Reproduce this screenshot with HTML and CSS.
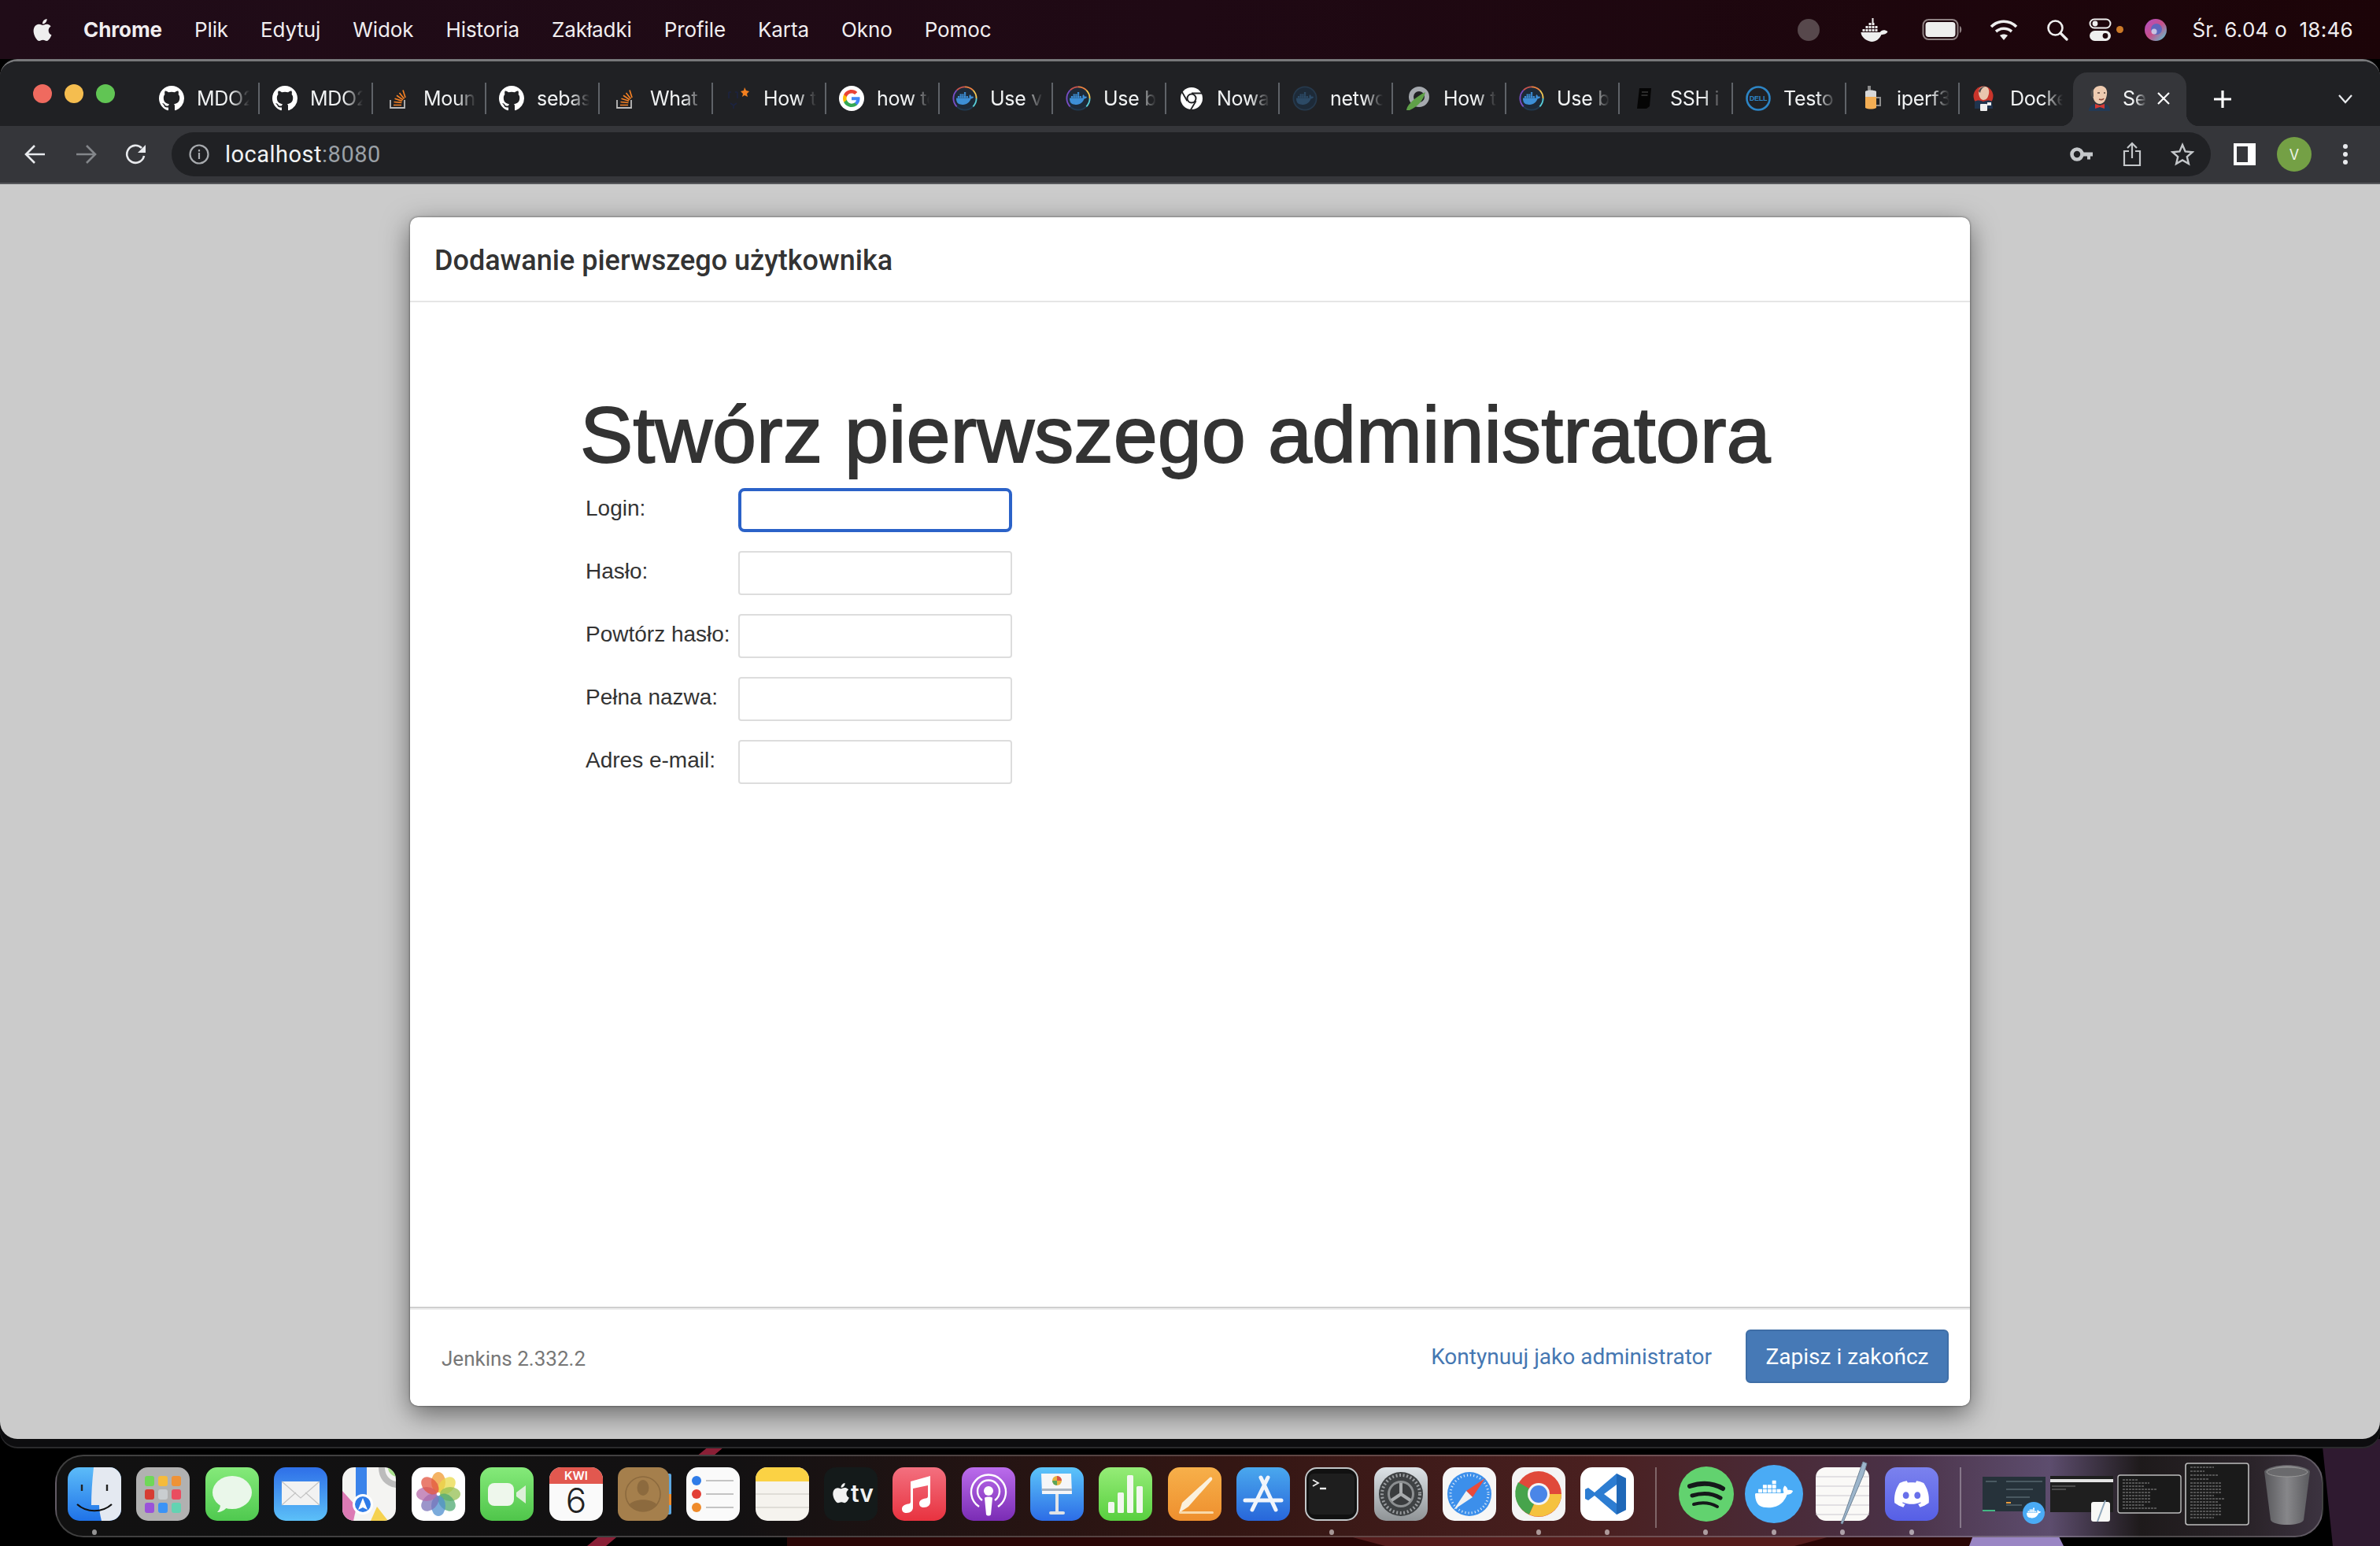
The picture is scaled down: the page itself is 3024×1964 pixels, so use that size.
FILE: index.html
```html
<!DOCTYPE html>
<html lang="pl">
<head>
    <meta charset="UTF-8">
    <title>Jenkins - Dodawanie pierwszego użytkownika</title>
    <link rel="stylesheet" href="styles.css">
</head>
<body>

    <svg class="defs">
        <symbol id="i-github" viewBox="0 0 16 16"><path fill="#fff" d="M8 0C3.58 0 0 3.58 0 8c0 3.54 2.29 6.53 5.47 7.59.4.07.55-.17.55-.38 0-.19-.01-.82-.01-1.49-2.01.37-2.53-.49-2.69-.94-.09-.23-.48-.94-.82-1.13-.28-.15-.68-.52-.01-.53.63-.01 1.08.58 1.23.82.72 1.21 1.87.87 2.33.66.07-.52.28-.87.51-1.07-1.78-.2-3.64-.89-3.64-3.95 0-.87.31-1.59.82-2.15-.08-.2-.36-1.02.08-2.12 0 0 .67-.21 2.2.82.64-.18 1.32-.27 2-.27.68 0 1.36.09 2 .27 1.53-1.04 2.2-.82 2.2-.82.44 1.1.16 1.92.08 2.12.51.56.82 1.27.82 2.15 0 3.07-1.87 3.75-3.65 3.95.29.25.54.73.54 1.48 0 1.07-.01 1.93-.01 2.2 0 .21.15.46.55.38A8.013 8.013 0 0016 8c0-4.42-3.58-8-8-8z"/></symbol>
        <symbol id="i-stack" viewBox="0 0 32 32"><path fill="none" stroke="#bcbbbb" stroke-width="1.800" d="M6 18v10h18V18"/><path fill="none" stroke="#f48024" stroke-width="1.700" d="M10 24.500h10M10.500 20.500l10 1M11.500 16.300l9.500 3M14 12.300l8 5.500M17.500 9l6 7.500M22 5.500l3 9.500"/></symbol>
        <symbol id="i-whale" viewBox="0 0 24 24"><path d="M13.983 11.078h2.119a.186.186 0 00.186-.185V9.006a.186.186 0 00-.186-.186h-2.119a.185.185 0 00-.185.185v1.888c0 .102.083.185.185.185m-2.954-5.43h2.118a.186.186 0 00.186-.186V3.574a.186.186 0 00-.186-.185h-2.118a.185.185 0 00-.185.185v1.888c0 .102.082.185.185.186m0 2.716h2.118a.187.187 0 00.186-.186V6.29a.186.186 0 00-.186-.185h-2.118a.185.185 0 00-.185.185v1.887c0 .102.082.185.185.186m-2.93 0h2.12a.186.186 0 00.184-.186V6.29a.185.185 0 00-.185-.185H8.1a.185.185 0 00-.185.185v1.887c0 .102.083.185.185.186m-2.964 0h2.119a.186.186 0 00.185-.186V6.29a.185.185 0 00-.185-.185H5.136a.186.186 0 00-.186.185v1.887c0 .102.084.185.186.186m5.893 2.715h2.118a.186.186 0 00.186-.185V9.006a.186.186 0 00-.186-.186h-2.118a.185.185 0 00-.185.185v1.888c0 .102.082.185.185.185m-2.93 0h2.12a.185.185 0 00.184-.185V9.006a.185.185 0 00-.184-.186h-2.12a.185.185 0 00-.184.185v1.888c0 .102.083.185.185.185m-2.964 0h2.119a.185.185 0 00.185-.185V9.006a.185.185 0 00-.184-.186h-2.12a.186.186 0 00-.186.186v1.887c0 .102.084.185.186.185m-2.92 0h2.12a.185.185 0 00.184-.185V9.006a.185.185 0 00-.184-.186h-2.12a.185.185 0 00-.184.185v1.888c0 .102.082.185.185.185M23.763 9.89c-.065-.051-.672-.51-1.954-.51-.338.001-.676.03-1.01.087-.248-1.7-1.653-2.53-1.716-2.566l-.344-.199-.226.327c-.284.438-.49.922-.612 1.43-.23.97-.09 1.882.403 2.661-.595.332-1.55.413-1.744.42H.751a.751.751 0 00-.75.748 11.376 11.376 0 00.692 4.062c.545 1.428 1.355 2.48 2.41 3.124 1.18.723 3.1 1.137 5.275 1.137.983.003 1.963-.086 2.93-.266a12.248 12.248 0 003.823-1.389c.98-.567 1.86-1.288 2.61-2.136 1.252-1.418 1.998-2.997 2.553-4.4h.221c1.372 0 2.215-.549 2.68-1.009.309-.293.55-.65.707-1.046l.098-.288z"/></symbol>
        <symbol id="i-docker-ring" viewBox="0 0 32 32">
            <circle cx="16" cy="16" r="14.6" fill="#1d2a38" stroke="#213a50" stroke-width="1.8"/>
            <path fill="none" stroke="#f0803c" stroke-width="1.8" d="M16 1.4A14.6 14.6 0 0 1 26.3 5.7"/>
            <path fill="none" stroke="#f5c64f" stroke-width="1.8" d="M26.3 5.7A14.6 14.6 0 0 1 30.6 16"/>
            <path fill="none" stroke="#5ad0d8" stroke-width="1.8" d="M30.6 16A14.6 14.6 0 0 1 26.3 26.3"/>
            <path fill="none" stroke="#c9524a" stroke-width="1.8" d="M16 1.4A14.6 14.6 0 0 0 5.7 5.7"/>
            <path fill="none" stroke="#7a4bc2" stroke-width="1.8" d="M5.7 5.7A14.6 14.6 0 0 0 1.4 16 14.6 14.6 0 0 0 5.7 26.3"/>
            <use href="#i-whale" x="5" y="5" width="22" height="22" fill="#3d8fd6"/>
        </symbol>
    </svg>

    <header class="menubar">
        <div class="menu-left">
            <svg class="apple" viewBox="0 0 24 24"><path fill="#eee" d="M12.152 6.896c-.948 0-2.415-1.078-3.96-1.04-2.04.027-3.91 1.183-4.961 3.014-2.117 3.675-.546 9.103 1.519 12.09 1.013 1.454 2.208 3.09 3.792 3.039 1.52-.065 2.09-.987 3.935-.987 1.831 0 2.35.987 3.96.948 1.637-.026 2.676-1.48 3.676-2.948 1.156-1.688 1.636-3.325 1.662-3.415-.039-.013-3.182-1.221-3.22-4.857-.026-3.04 2.48-4.494 2.597-4.559-1.429-2.09-3.623-2.324-4.39-2.376-2-.156-3.675 1.09-4.61 1.09zM15.53 3.83c.843-1.012 1.4-2.427 1.245-3.83-1.207.052-2.662.805-3.532 1.818-.78.896-1.454 2.338-1.273 3.714 1.338.104 2.715-.688 3.559-1.701"/></svg>
            <span class="menu-app">Chrome</span>
            <span>Plik</span>
            <span>Edytuj</span>
            <span>Widok</span>
            <span>Historia</span>
            <span>Zakładki</span>
            <span>Profile</span>
            <span>Karta</span>
            <span>Okno</span>
            <span>Pomoc</span>
        </div>
        <div class="menu-right">
            <span class="status-dot"></span>
            <svg class="st-docker" viewBox="0 0 36 30"><path fill="#eee" d="M15 0h2v6h-2zM11 6h3v3h-3zM15 6h3v3h-3zM7 10h3v3H7zM11 10h3v3h-3zM15 10h3v3h-3zM19 10h3v3h-3zM3 14h3v3H3zM7 14h3v3H7zM11 14h3v3h-3zM15 14h3v3h-3zM19 14h3v3h-3zM1 18h24c2-3 6-4 10-1-1 3-5 4-8 4-2 5-7 9-12 9S1 25 1 18z"/></svg>
            <svg class="st-battery" viewBox="0 0 52 30"><rect x="1.5" y="2" width="44" height="25" rx="7" fill="none" stroke="#8e8082" stroke-width="2"/><rect x="4.5" y="5" width="38" height="19" rx="4" fill="#eee"/><path d="M48 10c3 1 3 8 0 9z" fill="#8e8082"/></svg>
            <svg class="st-wifi" viewBox="0 0 36 28"><g fill="none" stroke="#eee" stroke-width="3.6"><path d="M2 10c9-9 23-9 32 0"/><path d="M8 16c6-5 14-5 20 0"/></g><path fill="#eee" d="M13 21c3-2 7-2 10 0l-5 6z"/></svg>
            <svg class="st-search" viewBox="0 0 28 28"><circle cx="11.5" cy="11.5" r="9" fill="none" stroke="#eee" stroke-width="2.6"/><path d="M18 18l8 8" stroke="#eee" stroke-width="3.2" stroke-linecap="round"/></svg>
            <svg class="st-control" viewBox="0 0 30 30"><rect x="1.5" y="1.5" width="26" height="11" rx="5.5" fill="none" stroke="#eee" stroke-width="2"/><circle cx="8" cy="7" r="3.4" fill="#eee"/><rect x="1" y="16" width="27" height="13" rx="6.5" fill="#eee"/><circle cx="21" cy="22.5" r="3.4" fill="#1d060c"/></svg>
            <span class="status-orange"></span>
            <svg class="st-siri" viewBox="0 0 28 28"><defs><linearGradient id="siri" x1="0" y1="0" x2="1" y2="1"><stop offset="0" stop-color="#b04fc8"/><stop offset=".5" stop-color="#c8508a"/><stop offset="1" stop-color="#4fd0d8"/></linearGradient></defs><circle cx="14" cy="14" r="14" fill="url(#siri)"/><circle cx="15" cy="13" r="7" fill="#4f68c4" opacity=".85"/><circle cx="12" cy="16" r="3.500" fill="#e9e3f0" opacity=".75"/></svg>
            <span class="clock">Śr. 6.04 o&nbsp; 18:46</span>
        </div>
    </header>

    <div class="browser">
        <div class="tabstrip">
            <div class="traffic">
                <span class="light light-red"></span>
                <span class="light light-yellow"></span>
                <span class="light light-green"></span>
            </div>

            <div class="tab"><svg class="favicon"><use href="#i-github"/></svg><span class="tab-title">MDO2</span></div>
            <div class="tab"><svg class="favicon"><use href="#i-github"/></svg><span class="tab-title">MDO2</span></div>
            <div class="tab"><svg class="favicon"><use href="#i-stack"/></svg><span class="tab-title">Mount</span></div>
            <div class="tab"><svg class="favicon"><use href="#i-github"/></svg><span class="tab-title">sebas</span></div>
            <div class="tab"><svg class="favicon"><use href="#i-stack"/></svg><span class="tab-title">What</span></div>
            <div class="tab">
                <svg class="favicon" viewBox="0 0 32 32"><path fill="none" stroke="#1c2340" stroke-width="1.6" d="M4 8h3M4 8v8M12 8h3M15 8v8M6 22l4 3 4-3M10 25v4"/><path fill="#f4801f" d="M24 2l2 4 4 1-3 3 1 4-4-2-3 2 1-4-3-3 4-1z"/></svg>
                <span class="tab-title">How t</span>
            </div>
            <div class="tab">
                <svg class="favicon" viewBox="0 0 32 32"><circle cx="16" cy="16" r="16" fill="#fff"/><g transform="translate(5 5) scale(.917)"><path fill="#4285f4" d="M23.5 12.3c0-.8-.1-1.6-.2-2.3H12v4.4h6.5c-.3 1.5-1.1 2.7-2.4 3.6v3h3.8c2.3-2.1 3.6-5.2 3.6-8.7z"/><path fill="#34a853" d="M12 24c3.2 0 6-1.1 7.9-2.9l-3.8-3c-1.1.7-2.4 1.2-4.1 1.2-3.1 0-5.8-2.1-6.7-5H1.3v3.1C3.3 21.3 7.3 24 12 24z"/><path fill="#fbbc05" d="M5.300 14.300c-.5-1.500-.5-3.100 0-4.600V6.600h-4c-1.700 3.300-1.700 7.500 0 10.800z"/><path fill="#ea4335" d="M12 4.800c1.800 0 3.300.6 4.600 1.800l3.400-3.400C17.900 1.200 15.200 0 12 0 7.300 0 3.300 2.700 1.300 6.600l4 3.100c.9-2.900 3.600-4.900 6.700-4.900z"/></g></svg>
                <span class="tab-title">how to</span>
            </div>
            <div class="tab"><svg class="favicon"><use href="#i-docker-ring"/></svg><span class="tab-title">Use v</span></div>
            <div class="tab"><svg class="favicon"><use href="#i-docker-ring"/></svg><span class="tab-title">Use b</span></div>
            <div class="tab">
                <svg class="favicon" viewBox="0 0 32 32"><circle cx="16" cy="16" r="14" fill="#fff"/><circle cx="16" cy="16" r="6.500" fill="#202124"/><circle cx="16" cy="16" r="4.500" fill="#fff"/><path d="M16 9.500h14M10.400 19.200L3.400 7M21.600 19.200L14.600 31" stroke="#202124" stroke-width="1.800" fill="none"/></svg>
                <span class="tab-title">Nowa</span>
            </div>
            <div class="tab">
                <svg class="favicon" viewBox="0 0 32 32"><circle cx="16" cy="16" r="14.600" fill="#1d2a38" stroke="#26394c" stroke-width="1.800"/><use href="#i-whale" x="5" y="5" width="22" height="22" fill="#2c4a66"/></svg>
                <span class="tab-title">netwo</span>
            </div>
            <div class="tab">
                <svg class="favicon" viewBox="0 0 32 32"><circle cx="17" cy="14" r="10" fill="none" stroke="#a5a9ae" stroke-width="6"/><path d="M1 31c1-5 3-7 5-9 5-6 13-11 19-14-2 10-9 18-20 23z" fill="#5fa048"/></svg>
                <span class="tab-title">How t</span>
            </div>
            <div class="tab"><svg class="favicon"><use href="#i-docker-ring"/></svg><span class="tab-title">Use b</span></div>
            <div class="tab">
                <svg class="favicon" viewBox="0 0 32 32"><path fill="#050505" d="M9 3h15l-2 23-4 3H6z"/><path d="M12 8h8M11.500 12h8" stroke="#3a3a3a" stroke-width="1.600"/></svg>
                <span class="tab-title">SSH i</span>
            </div>
            <div class="tab">
                <svg class="favicon" viewBox="0 0 32 32"><circle cx="16" cy="16" r="14.500" fill="none" stroke="#2d85c5" stroke-width="2.600"/><text class="dell-text" x="16" y="19">DELL</text></svg>
                <span class="tab-title">Testo</span>
            </div>
            <div class="tab">
                <svg class="favicon" viewBox="0 0 32 32"><rect x="11" y="0" width="4" height="7" fill="#8a8a8a"/><path fill="#d8d8d8" d="M8 7c4-2 10-2 14 0v8H8z"/><path fill="#f3ae54" d="M8 14h14v14c-4 2-10 2-14 0z"/><path fill="none" stroke="#8d8d8d" stroke-width="2" d="M22 15h5v10h-5"/></svg>
                <span class="tab-title">iperf3</span>
            </div>
            <div class="tab tab-last">
                <svg class="favicon" viewBox="0 0 32 32"><circle cx="14" cy="13" r="12.500" fill="#c9352b"/><path d="M8 8c0-5 4-8 8-7 4 0 6 4 5 9-1 5-3 8-7 8-3 0-6-4-6-10z" fill="#e8c6ae"/><path d="M8 7c1-4 5-6 8-6-4 2-5 4-6 8z" fill="#444"/><path fill="#20344e" d="M3 20c3-2 7-2 11 0 4-2 8-2 11 0l1 9H3z"/><rect x="10" y="23" width="9" height="9" rx="1" fill="#efefef"/><rect x="19" y="21" width="5" height="4" fill="#efefef"/></svg>
                <span class="tab-title">Docke</span>
            </div>
            <div class="tab tab-active">
                <svg class="favicon" viewBox="0 0 32 32"><path d="M7 10C7 4 11 0 17 0c6 0 9 5 8 11-1 7-4 12-9 12-6 0-9-6-9-13z" fill="#eecbb0"/><path d="M6 14c-2-2-2-8 1-10 1 3 1 6 1 10z" fill="#4c4c4c"/><path d="M13 9h3M21 9h2" stroke="#55423a" stroke-width="1.600"/><path d="M15 17c2 1 5 1 6-1" fill="none" stroke="#8c4a3a" stroke-width="1.600"/><path fill="#233a55" d="M2 32c0-5 3-8 8-9l6 2 6-2c4 1 7 4 7 9z"/><path fill="#d33833" d="M10 23l6 2 6-2v6l-6-2-6 2z"/></svg>
                <span class="tab-title tab-title-short">Se</span>
                <svg class="tab-close" viewBox="0 0 18 18"><path d="M2 2l14 14M16 2L2 16" stroke="#fff" stroke-width="2.200"/></svg>
            </div>

            <svg class="new-tab" viewBox="0 0 24 24"><path d="M12 1v22M1 12h22" stroke="#fff" stroke-width="3.200"/></svg>
            <svg class="tab-menu" viewBox="0 0 20 14"><path d="M2 2l8 9 8-9" fill="none" stroke="#e8eaed" stroke-width="2.200"/></svg>
        </div>

        <div class="toolbar">
            <svg class="tool-btn" viewBox="0 0 30 30"><path d="M27 15H4M14 4L3 15l11 11" fill="none" stroke="#e8eaed" stroke-width="2.600"/></svg>
            <svg class="tool-btn" viewBox="0 0 30 30"><path d="M3 15h23M16 4l11 11-11 11" fill="none" stroke="#83868a" stroke-width="2.600"/></svg>
            <svg class="tool-btn" viewBox="0 0 30 30"><path d="M25 17a11 11 0 1 1-3-10" fill="none" stroke="#e8eaed" stroke-width="2.600"/><path d="M27 3v10H17z" fill="#e8eaed"/></svg>

            <div class="omnibox">
                <svg class="omni-info" viewBox="0 0 26 26"><circle cx="13" cy="13" r="11.500" fill="none" stroke="#a8abaf" stroke-width="2.200"/><path d="M13 11v8M13 7v2.400" stroke="#a8abaf" stroke-width="2.200"/></svg>
                <span class="url">localhost<span class="url-port">:8080</span></span>
                <svg class="omni-key" viewBox="0 0 30 24"><circle cx="9" cy="12" r="6.500" fill="none" stroke="#c4c7ca" stroke-width="4.600"/><path d="M15 9.500h14v5h-3v4h-4v-4h-7z" fill="#c4c7ca"/></svg>
                <svg class="omni-share" viewBox="0 0 24 32"><path d="M8 12H2v18h20V12h-6" fill="none" stroke="#c4c7ca" stroke-width="2.200"/><path d="M12 21V2M6 8l6-6 6 6" fill="none" stroke="#c4c7ca" stroke-width="2.200"/></svg>
                <svg class="omni-star" viewBox="0 0 30 30"><path d="M15 3l3.600 8.400 9.100.8-6.900 6 2.100 8.900L15 22.400l-7.900 4.700 2.100-8.900-6.900-6 9.100-.8z" fill="none" stroke="#c4c7ca" stroke-width="2.400"/></svg>
            </div>

            <span class="side-panel"></span>
            <span class="avatar">V</span>
            <svg class="tool-more" viewBox="0 0 8 28"><circle cx="4" cy="4" r="3" fill="#e8eaed"/><circle cx="4" cy="14" r="3" fill="#e8eaed"/><circle cx="4" cy="24" r="3" fill="#e8eaed"/></svg>
        </div>

        <main class="page">
            <div class="modal">
                <div class="modal-head">
                    <h4 class="modal-title">Dodawanie pierwszego użytkownika</h4>
                </div>
                <div class="modal-body">
                    <h1 class="form-title">Stwórz pierwszego administratora</h1>
                    <form class="user-form">
                        <label class="form-label" for="username">Login:</label>
                        <input class="form-input form-input-focus" type="text" id="username">
                        <label class="form-label" for="password1">Hasło:</label>
                        <input class="form-input" type="password" id="password1">
                        <label class="form-label" for="password2">Powtórz hasło:</label>
                        <input class="form-input" type="password" id="password2">
                        <label class="form-label" for="fullname">Pełna nazwa:</label>
                        <input class="form-input" type="text" id="fullname">
                        <label class="form-label" for="email">Adres e-mail:</label>
                        <input class="form-input" type="text" id="email">
                    </form>
                </div>
                <div class="modal-foot">
                    <span class="version">Jenkins 2.332.2</span>
                    <a class="skip-link">Kontynuuj jako administrator</a>
                    <button class="save-btn" type="button">Zapisz i zakończ</button>
                </div>
            </div>
        </main>
    </div>

    <footer class="desk">
        <svg class="wall-art" viewBox="0 0 3024 136" preserveAspectRatio="none">
            <path d="M912 0h20L770 136h-24z" fill="#8a1f36"/>
            <path d="M1000 120h1510v16H1000z" fill="#2a0606"/>
            <path d="M1700 120h640l-60 16h-520z" fill="#551c1c"/>
            <path d="M2508 120h106l8 16h-120z" fill="#9a86c4"/>
            <path d="M2950 0h74v136h-60z" fill="#2f1a30"/>
        </svg>
        <nav class="dock">
            <div class="dock-item">
                <svg class="dock-icon" viewBox="0 0 68 68"><defs><linearGradient id="fin" x1="0" y1="0" x2="0" y2="1"><stop offset="0" stop-color="#5cbcf9"/><stop offset="1" stop-color="#1f72e8"/></linearGradient></defs><rect width="68" height="68" rx="15" fill="url(#fin)"/><path d="M33 0h20a15 15 0 0 1 15 15v38a15 15 0 0 1-15 15H43c-2-8-3-14-3-20H30c0-14 1-30 3-48z" fill="#e4e9f1"/><path d="M18 22v8M50 22v8" stroke="#222" stroke-width="2.400"/><path d="M12 47c12 11 32 11 44 0" fill="none" stroke="#111" stroke-width="2.200"/></svg>
                <span class="dock-dot"></span>
            </div>
            <div class="dock-item">
                <svg class="dock-icon" viewBox="0 0 68 68"><rect width="68" height="68" rx="15" fill="#b1b1b1"/><rect x="11" y="11" width="12" height="13" rx="3" fill="#6fd858"/><rect x="28" y="11" width="12" height="13" rx="3" fill="#f5bb3c"/><rect x="45" y="11" width="12" height="13" rx="3" fill="#ef9236"/><rect x="11" y="28" width="12" height="13" rx="3" fill="#d63d33"/><rect x="28" y="28" width="12" height="13" rx="3" fill="#c9cdd0"/><rect x="45" y="28" width="12" height="13" rx="3" fill="#ea4d5f"/><rect x="11" y="45" width="12" height="13" rx="3" fill="#9a52d9"/><rect x="28" y="45" width="12" height="13" rx="3" fill="#3b93f5"/><rect x="45" y="45" width="12" height="13" rx="3" fill="#63d3b2"/></svg>
            </div>
            <div class="dock-item">
                <svg class="dock-icon" viewBox="0 0 68 68"><defs><linearGradient id="msg" x1="0" y1="0" x2="0" y2="1"><stop offset="0" stop-color="#85ea7a"/><stop offset="1" stop-color="#4fc94f"/></linearGradient></defs><rect width="68" height="68" rx="15" fill="url(#msg)"/><ellipse cx="34" cy="32" rx="25" ry="21" fill="#eaf7ea"/><path d="M19 47c0 5-2 8-4 10 4 0 9-2 12-6z" fill="#eaf7ea"/></svg>
            </div>
            <div class="dock-item">
                <svg class="dock-icon" viewBox="0 0 68 68"><defs><linearGradient id="mail" x1="0" y1="0" x2="0" y2="1"><stop offset="0" stop-color="#2e6fe8"/><stop offset="1" stop-color="#5cc0f8"/></linearGradient></defs><rect width="68" height="68" rx="15" fill="url(#mail)"/><rect x="10" y="18" width="48" height="30" rx="2" fill="#f2f2f2"/><path d="M10 18l24 21 24-21M10 48l18-16M58 48L40 32" fill="none" stroke="#c4c4c4" stroke-width="1.200"/></svg>
            </div>
            <div class="dock-item">
                <svg class="dock-icon" viewBox="0 0 68 68"><defs><clipPath id="mapclip"><rect width="68" height="68" rx="15"/></clipPath></defs><g clip-path="url(#mapclip)"><rect width="68" height="68" fill="#f4f4f2"/><path d="M0 30l18 20-4 18H0z" fill="#dc7ab4"/><path d="M36 68l8-18 14 18z" fill="#f5d24f"/><rect x="17" y="0" width="14" height="40" fill="#3a83ea"/><path d="M46 0c0 14 8 24 22 26v-8C58 16 54 8 54 0z" fill="#bcbcbc"/><path d="M58 0c0 6 4 10 10 12V0z" fill="#a8e08c"/><circle cx="26" cy="47" r="13" fill="#fff"/><circle cx="26" cy="47" r="10" fill="#2f7ce8"/><path d="M26 39l6 15-6-3-6 3z" fill="#fff"/></g></svg>
            </div>
            <div class="dock-item">
                <svg class="dock-icon" viewBox="0 0 68 68"><rect width="68" height="68" rx="15" fill="#fff"/><g class="petals"><ellipse cx="34" cy="19" rx="9" ry="13" fill="#f09a30"/><ellipse cx="34" cy="19" rx="9" ry="13" fill="#e9d94a" transform="rotate(45 34 34)"/><ellipse cx="34" cy="19" rx="9" ry="13" fill="#94bf52" transform="rotate(90 34 34)"/><ellipse cx="34" cy="19" rx="9" ry="13" fill="#4faa72" transform="rotate(135 34 34)"/><ellipse cx="34" cy="19" rx="9" ry="13" fill="#4f8fcf" transform="rotate(180 34 34)"/><ellipse cx="34" cy="19" rx="9" ry="13" fill="#7a72b8" transform="rotate(225 34 34)"/><ellipse cx="34" cy="19" rx="9" ry="13" fill="#b66aa8" transform="rotate(270 34 34)"/><ellipse cx="34" cy="19" rx="9" ry="13" fill="#e2533f" transform="rotate(315 34 34)"/></g></svg>
            </div>
            <div class="dock-item">
                <svg class="dock-icon" viewBox="0 0 68 68"><defs><linearGradient id="ft" x1="0" y1="0" x2="0" y2="1"><stop offset="0" stop-color="#85ea7a"/><stop offset="1" stop-color="#4fc54a"/></linearGradient></defs><rect width="68" height="68" rx="15" fill="url(#ft)"/><rect x="10" y="20" width="33" height="29" rx="8" fill="#eef7ec"/><path d="M46 32l12-9v23l-12-9z" fill="#dcefd8"/></svg>
            </div>
            <div class="dock-item">
                <svg class="dock-icon" viewBox="0 0 68 68"><rect width="68" height="68" rx="15" fill="#fafafa"/><path d="M0 21V15A15 15 0 0 1 15 0h38a15 15 0 0 1 15 15v6z" fill="#e2584f"/><text class="cal-month" x="34" y="16">KWI</text><text class="cal-day" x="34" y="58">6</text></svg>
            </div>
            <div class="dock-item">
                <svg class="dock-icon" viewBox="0 0 68 68"><rect x="60" y="8" width="8" height="52" rx="2" fill="#5da7e0"/><rect x="60" y="34" width="8" height="14" fill="#ee8b2c"/><rect width="65" height="68" rx="13" fill="#a57f4c"/><circle cx="32" cy="34" r="22" fill="none" stroke="#8c6a3e" stroke-width="1.600"/><ellipse cx="32" cy="26" rx="7.500" ry="10" fill="#8c6a3e"/><path d="M14 48c6-9 30-9 36 0-8 10-28 10-36 0z" fill="#8c6a3e"/></svg>
            </div>
            <div class="dock-item">
                <svg class="dock-icon" viewBox="0 0 68 68"><rect width="68" height="68" rx="15" fill="#fafafa"/><circle cx="13" cy="17" r="6" fill="#2f7ce8"/><circle cx="13" cy="34" r="6" fill="#e23f36"/><circle cx="13" cy="51" r="6" fill="#ef8b2b"/><path d="M25 17h35M25 34h35M25 51h35" stroke="#c4c4c4" stroke-width="2"/></svg>
            </div>
            <div class="dock-item">
                <svg class="dock-icon" viewBox="0 0 68 68"><rect width="68" height="68" rx="15" fill="#f5f3ee"/><path d="M0 18V15A15 15 0 0 1 15 0h38a15 15 0 0 1 15 15v3z" fill="#fbd244"/><path d="M0 34h68M0 51h68" stroke="#d8d6d0" stroke-width="1.400"/></svg>
            </div>
            <div class="dock-item">
                <svg class="dock-icon" viewBox="0 0 68 68"><rect width="68" height="68" rx="15" fill="#141a1a"/><g transform="translate(9 20) scale(1.050)"><path fill="#f2f2f2" d="M12.152 6.896c-.948 0-2.415-1.078-3.96-1.04-2.04.027-3.91 1.183-4.961 3.014-2.117 3.675-.546 9.103 1.519 12.09 1.013 1.454 2.208 3.09 3.792 3.039 1.52-.065 2.09-.987 3.935-.987 1.831 0 2.35.987 3.96.948 1.637-.026 2.676-1.48 3.676-2.948 1.156-1.688 1.636-3.325 1.662-3.415-.039-.013-3.182-1.221-3.22-4.857-.026-3.04 2.48-4.494 2.597-4.559-1.429-2.09-3.623-2.324-4.39-2.376-2-.156-3.675 1.09-4.61 1.09zM15.530 3.830c.843-1.012 1.400-2.427 1.245-3.830-1.207.052-2.662.805-3.532 1.818-.78.896-1.454 2.338-1.273 3.714 1.338.104 2.715-.688 3.559-1.701"/></g><text class="tv-text" x="34" y="44">tv</text></svg>
            </div>
            <div class="dock-item">
                <svg class="dock-icon" viewBox="0 0 68 68"><defs><linearGradient id="mus" x1="0" y1="0" x2="0" y2="1"><stop offset="0" stop-color="#f3707f"/><stop offset="1" stop-color="#e8323f"/></linearGradient></defs><rect width="68" height="68" rx="15" fill="url(#mus)"/><path fill="#fff" d="M48 11v33c0 4-3 7-8 7-4 0-6-2-6-5 0-4 4-6 8-6.500 2-.3 3-1 3-3V23l-19 4v24c0 4-3 7-8 7-4 0-6-2-6-5 0-4 4-6 8-6.500 2-.3 3-1 3-3V18z"/></svg>
            </div>
            <div class="dock-item">
                <svg class="dock-icon" viewBox="0 0 68 68"><defs><linearGradient id="pod" x1="0" y1="0" x2="0" y2="1"><stop offset="0" stop-color="#bb6cec"/><stop offset="1" stop-color="#7a2cb4"/></linearGradient></defs><rect width="68" height="68" rx="15" fill="url(#pod)"/><g fill="none" stroke="#fff" stroke-width="2.400"><path d="M22 50a22 22 0 1 1 24 0"/><path d="M26 42a14 14 0 1 1 16 0"/></g><circle cx="34" cy="30" r="6" fill="#fff"/><path d="M29 39c1-2 9-2 10 0l-2 21c-1 2-5 2-6 0z" fill="#fff"/></svg>
            </div>
            <div class="dock-item">
                <svg class="dock-icon" viewBox="0 0 68 68"><defs><linearGradient id="key" x1="0" y1="0" x2="0" y2="1"><stop offset="0" stop-color="#5cc5fa"/><stop offset="1" stop-color="#2c6ce6"/></linearGradient></defs><rect width="68" height="68" rx="15" fill="url(#key)"/><path d="M14 8h38l1 26H15z" fill="#f5f6f8"/><rect x="15" y="27" width="38" height="3" fill="#a9b5c2"/><circle cx="34" cy="17" r="6" fill="#e9b23f"/><path d="M34 11a6 6 0 0 1 6 6h-6z" fill="#d9534a"/><path d="M34 17v6a6 6 0 0 1-6-6z" fill="#5aa65a"/><rect x="32" y="34" width="4" height="22" fill="#e2e5e8"/><rect x="24" y="56" width="20" height="4" rx="2" fill="#dfe2e6"/></svg>
            </div>
            <div class="dock-item">
                <svg class="dock-icon" viewBox="0 0 68 68"><defs><linearGradient id="num" x1="0" y1="0" x2="0" y2="1"><stop offset="0" stop-color="#95ec77"/><stop offset="1" stop-color="#58cf3f"/></linearGradient></defs><rect width="68" height="68" rx="15" fill="url(#num)"/><rect x="12" y="44" width="8" height="14" rx="1.500" fill="#f2f7ef"/><rect x="24" y="32" width="8" height="26" rx="1.500" fill="#f2f7ef"/><rect x="36" y="10" width="8" height="48" rx="1.500" fill="#f2f7ef"/><rect x="48" y="24" width="8" height="34" rx="1.500" fill="#f2f7ef"/></svg>
            </div>
            <div class="dock-item">
                <svg class="dock-icon" viewBox="0 0 68 68"><defs><linearGradient id="pag" x1="0" y1="0" x2="0" y2="1"><stop offset="0" stop-color="#f7b04a"/><stop offset="1" stop-color="#ee8f2e"/></linearGradient></defs><rect width="68" height="68" rx="15" fill="url(#pag)"/><path d="M52 14c3-3 5-1 4 2L26 50l-12 8 4-13z" fill="#fbf1de"/><rect x="14" y="56" width="44" height="3" rx="1.500" fill="#f9d9a9"/></svg>
            </div>
            <div class="dock-item">
                <svg class="dock-icon" viewBox="0 0 68 68"><defs><linearGradient id="app" x1="0" y1="0" x2="0" y2="1"><stop offset="0" stop-color="#4aa8ee"/><stop offset="1" stop-color="#2866da"/></linearGradient></defs><rect width="68" height="68" rx="15" fill="url(#app)"/><g stroke="#f1f5fb" stroke-width="5" stroke-linecap="round"><path d="M40 13L20 54M31 13l19 41"/><path d="M11 42h46"/></g></svg>
            </div>
            <div class="dock-item">
                <svg class="dock-icon" viewBox="0 0 68 68"><rect x="1" y="1" width="66" height="66" rx="14" fill="#111" stroke="#c2c6c8" stroke-width="2"/><rect x="5" y="8" width="58" height="52" rx="6" fill="#1e1e1e"/><path d="M10 16l7 4-7 4" fill="none" stroke="#eee" stroke-width="1.800"/><path d="M19 27h8" stroke="#eee" stroke-width="2.400"/></svg>
                <span class="dock-dot"></span>
            </div>
            <div class="dock-item">
                <svg class="dock-icon" viewBox="0 0 68 68"><defs><linearGradient id="sys" x1="0" y1="0" x2="0" y2="1"><stop offset="0" stop-color="#dde3e7"/><stop offset="1" stop-color="#8f9396"/></linearGradient></defs><rect width="68" height="68" rx="15" fill="url(#sys)"/><circle cx="34" cy="34" r="28" fill="#3f4244"/><circle cx="34" cy="34" r="24" fill="none" stroke="#9a9da0" stroke-width="4" stroke-dasharray="2 2.600"/><circle cx="34" cy="34" r="17" fill="#8c8f91"/><circle cx="34" cy="34" r="14" fill="#3a3c3e"/><path d="M34 20v14M34 34l12 8M34 34l-12 8" stroke="#a8abad" stroke-width="4"/></svg>
            </div>
            <div class="dock-item">
                <svg class="dock-icon" viewBox="0 0 68 68"><rect width="68" height="68" rx="15" fill="#f6f6f6"/><circle cx="34" cy="34" r="28" fill="#3c8feb"/><circle cx="34" cy="34" r="24" fill="none" stroke="#d5e6f8" stroke-width="3" stroke-dasharray="1.200 3"/><path d="M54 14L38 38 30 30z" fill="#e94b3c"/><path d="M14 54l16-24 8 8z" fill="#f2f2f2"/></svg>
            </div>
            <div class="dock-item">
                <svg class="dock-icon" viewBox="0 0 68 68"><rect width="68" height="68" rx="15" fill="#f4f4f4"/><circle cx="34" cy="34" r="29" fill="#e0493a"/><path d="M34 34L8 19A29 29 0 0 0 22 60z" fill="#47a44c"/><path d="M34 34L63 34A29 29 0 0 1 22 60z" fill="#f5c23f"/><circle cx="34" cy="34" r="14" fill="#f4f4f4"/><circle cx="34" cy="34" r="11" fill="#4a86e8"/></svg>
                <span class="dock-dot"></span>
            </div>
            <div class="dock-item">
                <svg class="dock-icon" viewBox="0 0 68 68"><rect width="68" height="68" rx="15" fill="#fff"/><path d="M46 8l12 6v40l-12 6-28-24-8 6-4-2V28l4-2 8 6zM46 22L30 34l16 12z" fill="#2d7dd2"/><path d="M46 8l12 6v40l-12 6z" fill="#1f68b8"/></svg>
                <span class="dock-dot"></span>
            </div>

            <span class="dock-sep"></span>

            <div class="dock-item">
                <svg class="dock-icon" viewBox="0 0 68 68"><circle cx="35" cy="34" r="35" fill="#62d26f"/><g fill="none" stroke="#15191a" stroke-linecap="round"><path d="M14 24c15-5 30-4 42 3" stroke-width="6"/><path d="M17 36c13-4 26-3 36 3" stroke-width="5"/><path d="M19 47c11-3 21-2 30 3" stroke-width="4"/></g></svg>
                <span class="dock-dot"></span>
            </div>
            <div class="dock-item">
                <svg class="dock-icon dock-icon-big" viewBox="0 0 74 74"><circle cx="37" cy="37" r="37" fill="#4aabf5"/><use href="#i-whale" x="13" y="13" width="48" height="48" fill="#fff"/></svg>
                <span class="dock-dot"></span>
            </div>
            <div class="dock-item">
                <svg class="dock-icon" viewBox="0 0 68 68"><rect width="68" height="68" rx="13" fill="#faf9f7"/><path d="M0 12h68M0 24h68M0 36h68M0 48h68M0 60h68" stroke="#c9c8d0" stroke-width="1.200"/><path d="M60-7l5 2-4 14L34 72l-2-1 4-10z" fill="#9db6cc" stroke="#6e8396"/></svg>
                <span class="dock-dot"></span>
            </div>
            <div class="dock-item">
                <svg class="dock-icon" viewBox="0 0 68 68"><defs><linearGradient id="dis" x1="0" y1="0" x2="0" y2="1"><stop offset="0" stop-color="#7b82ee"/><stop offset="1" stop-color="#565fe6"/></linearGradient></defs><rect width="68" height="68" rx="15" fill="url(#dis)"/><g transform="translate(12 12) scale(1.830)"><path fill="#fff" d="M20.317 4.3698a19.7913 19.7913 0 00-4.8851-1.5152.0741.0741 0 00-.0785.0371c-.211.3753-.4447.8648-.6083 1.2495-1.8447-.2762-3.68-.2762-5.4868 0-.1636-.3933-.4058-.8742-.6177-1.2495a.077.077 0 00-.0785-.037 19.7363 19.7363 0 00-4.8852 1.515.0699.0699 0 00-.0321.0277C.5334 9.0458-.319 13.5799.0992 18.0578a.0824.0824 0 00.0312.0561c2.0528 1.5076 4.0413 2.4228 5.9929 3.0294a.0777.0777 0 00.0842-.0276c.4616-.6304.8731-1.2952 1.226-1.9942a.076.076 0 00-.0416-.1057c-.6528-.2476-1.2743-.5495-1.8722-.8923a.077.077 0 01-.0076-.1277c.1258-.0943.2517-.1923.3718-.2914a.0743.0743 0 01.0776-.0105c3.9278 1.7933 8.18 1.7933 12.0614 0a.0739.0739 0 01.0785.0095c.1202.099.246.1981.3728.2924a.077.077 0 01-.0066.1276 12.2986 12.2986 0 01-1.873.8914.0766.0766 0 00-.0407.1067c.3604.698.7719 1.3628 1.225 1.9932a.076.076 0 00.0842.0286c1.961-.6067 3.9495-1.5219 6.0023-3.0294a.077.077 0 00.0313-.0552c.5004-5.177-.8382-9.6739-3.5485-13.6604a.061.061 0 00-.0312-.0286zM8.02 15.3312c-1.1825 0-2.1569-1.0857-2.1569-2.419 0-1.3332.9555-2.4189 2.157-2.4189 1.2108 0 2.1757 1.0952 2.1568 2.419 0 1.3332-.9555 2.4189-2.1569 2.4189zm7.9748 0c-1.1825 0-2.1569-1.0857-2.1569-2.419 0-1.3332.9554-2.4189 2.1569-2.4189 1.2108 0 2.1757 1.0952 2.1568 2.419 0 1.3332-.946 2.4189-2.1568 2.4189Z"/></g></svg>
                <span class="dock-dot"></span>
            </div>

            <span class="dock-sep"></span>

            <div class="dock-thumbs">
                <svg class="dock-thumb" viewBox="0 0 80 68"><rect y="12" width="80" height="44" fill="#26323a"/><path d="M4 18h14M30 18h46M30 28h34M30 38h30M30 48h20" stroke="#6f8088" stroke-width="1"/><rect y="54" width="16" height="2" fill="#42b883"/><rect x="30" y="44" width="6" height="2" fill="#e89a3c"/><circle cx="65" cy="58" r="14" fill="#4aabf5"/><use href="#i-whale" x="56" y="49" width="18" height="18" fill="#fff"/></svg>
                <svg class="dock-thumb" viewBox="0 0 80 68"><rect y="11" width="80" height="46" fill="#1f1f1f"/><rect y="15" width="80" height="4" fill="#e4e4e4"/><path d="M2 24h30M2 28h18" stroke="#777" stroke-width="1"/><rect x="52" y="44" width="24" height="25" rx="3" fill="#f8f8f6"/><path d="M70 42L60 69" stroke="#8fa7bb" stroke-width="2"/></svg>
                <svg class="dock-thumb" viewBox="0 0 80 68"><rect y="10" width="80" height="48" rx="3" fill="#1a1a1a" stroke="#bdbdbd" stroke-width="1.400"/><path d="M6 16h20M6 20h34M6 24h28M6 28h44M6 32h36M6 36h36M6 40h36M6 44h36M6 48h28M6 52h44" stroke="#8d8d8d" stroke-width="1" stroke-dasharray="3 1"/></svg>
                <svg class="dock-thumb" viewBox="0 0 80 68"><rect y="-5" width="80" height="78" rx="3" fill="#1a1a1a" stroke="#bdbdbd" stroke-width="1.600"/><path d="M6 0h30M6 5h18M6 10h36M6 15h24M6 20h40M6 24h40M6 28h40M6 32h40M6 36h30M6 40h44M6 44h36M6 48h40M6 52h40M6 56h40M6 60h40M6 64h30" stroke="#8d8d8d" stroke-width="1" stroke-dasharray="3 1"/></svg>
            </div>

            <div class="dock-item dock-trash">
                <svg class="trash-icon" viewBox="0 0 60 76"><defs><linearGradient id="trash" x1="0" y1="0" x2="1" y2="0"><stop offset="0" stop-color="#58585c"/><stop offset=".5" stop-color="#87878a"/><stop offset="1" stop-color="#5a5a5e"/></linearGradient></defs><path d="M1 8c8-10 50-10 58 0l-8 62c-4 8-38 8-42 0z" fill="url(#trash)"/><ellipse cx="30" cy="9" rx="26" ry="6" fill="#6a6a6d" stroke="#999" stroke-width="1"/></svg>
            </div>
        </nav>
    </footer>

</body>
</html>
```

FILE: styles.css
```css
* {
    box-sizing: border-box;
}

html, body {
    margin: 0;
    padding: 0;
}

body {
    width: 3024px;
    height: 1964px;
    overflow: hidden;
    display: flex;
    flex-direction: column;
    background-color: #000;
    font-family: Inter, "Liberation Sans", sans-serif;
}

.defs {
    width: 0;
    height: 0;
    display: block;
    overflow: hidden;
}

/* pasek menu */
.menubar {
    height: 75px;
    flex: none;
    display: flex;
    align-items: center;
    justify-content: space-between;
    padding: 0 34px 0 40px;
    background: linear-gradient(to right, #200c18, #1f0914 50%, #1c0408);
    color: #f1eef0;
    font-size: 26px;
}

.menu-left {
    display: flex;
    align-items: center;
    gap: 41px;
}

.menu-left span {
    letter-spacing: -0.1px;
}

.apple {
    width: 28px;
    height: 32px;
    margin-right: -3px;
}

.menu-app {
    font-weight: 700;
}

.menu-right {
    display: flex;
    align-items: center;
}

.status-dot {
    width: 28px;
    height: 28px;
    border-radius: 50%;
    background-color: #57484c;
    margin-right: 51px;
}

.st-docker {
    width: 37px;
    height: 30px;
    margin-right: 42px;
}

.st-battery {
    width: 52px;
    height: 30px;
    margin-right: 34px;
}

.st-wifi {
    width: 36px;
    height: 28px;
    margin-right: 36px;
}

.st-search {
    width: 28px;
    height: 28px;
    margin-right: 26px;
}

.st-control {
    width: 30px;
    height: 30px;
    margin-right: 5px;
}

.status-orange {
    width: 9px;
    height: 9px;
    border-radius: 50%;
    background-color: #cc7a28;
    margin-right: 27px;
}

.st-siri {
    width: 28px;
    height: 28px;
    margin-right: 32px;
}

.clock {
    white-space: nowrap;
    letter-spacing: 0.3px;
}

/* okno przegladarki */
.browser {
    height: 1753px;
    flex: none;
    display: flex;
    flex-direction: column;
    border-radius: 22px;
    background-color: #202124;
    box-shadow: 0 10px 0 #0d0d0f, 0 12px 0 #2a2a2c;
    overflow: hidden;
    border-top: 3px solid #77787a;
    position: relative;
    z-index: 1;
}

.tabstrip {
    height: 82px;
    flex: none;
    display: flex;
    align-items: flex-end;
    background-color: #202124;
}

.traffic {
    width: 186px;
    height: 68px;
    flex: none;
    display: flex;
    align-items: center;
    gap: 16px;
    padding-left: 42px;
    padding-bottom: 14px;
}

.light {
    width: 24px;
    height: 24px;
    border-radius: 50%;
}

.light-red {
    background-color: #ef6a5f;
}

.light-yellow {
    background-color: #f5bd4f;
}

.light-green {
    background-color: #61c554;
}

.tab {
    width: 144px;
    height: 68px;
    flex: none;
    display: flex;
    align-items: center;
    padding-left: 16px;
    padding-bottom: 2px;
    color: #f1f3f4;
    font-size: 25px;
    letter-spacing: -0.3px;
}

.tab::after {
    content: "";
    width: 2px;
    height: 40px;
    flex: none;
    margin-left: auto;
    background-color: #5f6368;
}

.tab-last::after {
    display: none;
}

.favicon {
    width: 32px;
    height: 32px;
    flex: none;
    margin-right: 16px;
}

/* tytul wygasa przed separatorem */
.tab-title {
    width: 78px;
    flex: none;
    white-space: nowrap;
    -webkit-mask-image: linear-gradient(to right, #000 55%, transparent 86%);
    mask-image: linear-gradient(to right, #000 55%, transparent 86%);
}

.tab-active {
    position: relative;
    background-color: #35363a;
    border-radius: 18px 18px 0 0;
    padding-left: 18px;
}

.tab-active .favicon {
    margin-right: 13px;
}

.tab-active::after {
    display: none;
}

/* zaokraglenia aktywnej karty */
.tab-active::before {
    content: "";
    position: absolute;
    left: -16px;
    right: -16px;
    bottom: 0;
    height: 16px;
    background:
        radial-gradient(circle at 0 0, transparent 16px, #35363a 16.5px) left bottom / 16px 16px no-repeat,
        radial-gradient(circle at 100% 0, transparent 16px, #35363a 16.5px) right bottom / 16px 16px no-repeat;
}

.tab-title-short {
    width: 30px;
    margin-right: 13px;
    -webkit-mask-image: linear-gradient(to right, #000 55%, transparent 100%);
    mask-image: linear-gradient(to right, #000 55%, transparent 100%);
}

.tab-close {
    width: 18px;
    height: 18px;
    flex: none;
}

.new-tab {
    width: 24px;
    height: 24px;
    margin: 0 0 22px 34px;
}

.tab-menu {
    width: 20px;
    height: 14px;
    margin: 0 0 27px 134px;
}

.toolbar {
    height: 74px;
    flex: none;
    display: flex;
    align-items: center;
    padding: 0 26px 0 30px;
    background-color: #35363a;
    border-bottom: 2px solid #55565a;
}

.tool-btn {
    width: 30px;
    height: 30px;
    margin-right: 34px;
}

.omnibox {
    width: 2591px;
    height: 56px;
    flex: none;
    margin-left: -4px;
    display: flex;
    align-items: center;
    padding: 0 21px 0 22px;
    border-radius: 28px;
    background-color: #202124;
}

.omni-info {
    width: 26px;
    height: 26px;
    margin-right: 20px;
}

.url {
    color: #f1f3f4;
    font-size: 29px;
    font-family: Roboto, sans-serif;
    letter-spacing: 0.5px;
}

.url-port {
    color: #9aa0a6;
}

.omni-key {
    width: 30px;
    height: 24px;
    margin-left: auto;
    margin-right: 37px;
}

.omni-share {
    width: 24px;
    height: 32px;
    margin-right: 37px;
}

.omni-star {
    width: 30px;
    height: 30px;
}

.side-panel {
    width: 28px;
    height: 28px;
    margin-left: 29px;
    border: solid #fff;
    border-width: 4px 10px 4px 4px;
}

.avatar {
    width: 44px;
    height: 44px;
    margin-left: 27px;
    border-radius: 50%;
    background-color: #74a045;
    color: #eef3e8;
    font-size: 18px;
    display: flex;
    align-items: center;
    justify-content: center;
}

.tool-more {
    width: 8px;
    height: 28px;
    margin-left: 39px;
}

/* strona */
.page {
    flex: 1;
    padding-top: 42px;
    background-color: #cbcbcb;
    overflow: hidden;
}

.modal {
    width: 1982px;
    height: 1510px;
    margin: 0 auto;
    display: flex;
    flex-direction: column;
    background-color: #fff;
    border-radius: 10px;
    box-shadow: 0 0 3px rgba(0, 0, 0, 0.55), 0 10px 34px rgba(0, 0, 0, 0.5);
}

.modal-head {
    height: 108px;
    flex: none;
    display: flex;
    align-items: center;
    padding: 3px 31px 0;
    border-bottom: 2px solid #e5e5e5;
}

.modal-title {
    margin: 0;
    font-family: Roboto, sans-serif;
    font-weight: 500;
    font-size: 36px;
    color: #333;
}

.modal-body {
    flex: 1;
    padding: 106px 0 0 216px;
    border-bottom: 2px solid #cfcfcf;
}

.form-title {
    margin: 0;
    height: 130px;
    font-family: "Liberation Sans", Arial, sans-serif;
    font-weight: 400;
    font-size: 100.8px;
    line-height: 124px;
    color: #333;
    -webkit-text-stroke: 1.8px #333;
}

.user-form {
    display: grid;
    grid-template-columns: 201px 348px;
    grid-auto-rows: 56px;
    row-gap: 24px;
    align-items: center;
}

.form-label {
    padding-left: 7px;
    padding-bottom: 4px;
    font-family: "Liberation Sans", Arial, sans-serif;
    font-size: 28px;
    color: #333;
}

.form-input {
    width: 348px;
    height: 56px;
    padding: 0 12px;
    border: 2px solid #ddd;
    border-radius: 4px;
    background-color: #fff;
    outline: none;
}

.form-input-focus {
    border: 4px solid #2b62c8;
    border-radius: 8px;
}

.modal-foot {
    height: 124px;
    flex: none;
    display: flex;
    align-items: center;
    padding: 0 27px 4px 40px;
    border-top: 2px solid #eee;
    font-family: Roboto, sans-serif;
    font-size: 28px;
}

.version {
    margin-right: auto;
    margin-top: 6px;
    color: #777;
    font-family: Roboto, sans-serif;
    font-size: 26px;
}

.skip-link {
    margin-right: 43px;
    color: #4577b2;
}

.save-btn {
    width: 258px;
    height: 68px;
    border: 2px solid #3f6ea6;
    border-radius: 6px;
    background-color: #4679b6;
    color: #fff;
    font-family: Roboto, sans-serif;
    font-size: 28px;
}

/* dock */
.desk {
    flex: 1;
    position: relative;
    padding: 20px 72px 0 70px;
}

.wall-art {
    position: absolute;
    left: 0;
    top: 0;
    width: 100%;
    height: 100%;
}

.dock {
    position: relative;
    height: 105px;
    display: flex;
    align-items: flex-start;
    gap: 19.36px;
    padding: 14px 14px 0;
    border: 2px solid rgba(255, 255, 255, 0.2);
    border-radius: 36px;
    background: linear-gradient(to right, #111 0, #131112 30%, #341613 52%, #4a2020 68%, #4a3146 81%, #5d4d6e 88%, #1e1a1b 92%, #2b242a 97%, #3c3340 100%);
}

.dock-item {
    width: 68px;
    height: 87px;
    flex: none;
    display: flex;
    flex-direction: column;
    align-items: center;
}

.dock-icon {
    width: 68px;
    height: 68px;
    flex: none;
    overflow: visible;
}

.dock-icon-big {
    width: 74px;
    height: 74px;
    margin-top: -3px;
    margin-bottom: -3px;
}

.dock-dot {
    width: 6px;
    height: 7px;
    margin-top: 11px;
    border-radius: 50%;
    background-color: rgba(255, 255, 255, 0.55);
}

.dock-sep {
    width: 2px;
    height: 77px;
    flex: none;
    margin: 0 8px;
    background-color: rgba(255, 255, 255, 0.3);
}

.dock-thumbs {
    display: flex;
    gap: 6px;
    flex: none;
}

.dock-thumb {
    width: 80px;
    height: 68px;
    overflow: visible;
}

.dock-trash {
    width: 60px;
    margin-left: -1px;
}

.trash-icon {
    width: 60px;
    height: 76px;
    margin-top: -3px;
}

.dell-text {
    fill: #2d85c5;
    font-family: "Liberation Sans", sans-serif;
    font-weight: 700;
    font-size: 9px;
    text-anchor: middle;
}

.cal-month {
    fill: #fff;
    font-family: Inter, sans-serif;
    font-weight: 600;
    font-size: 15px;
    text-anchor: middle;
}

.cal-day {
    fill: #222;
    font-family: Inter, sans-serif;
    font-weight: 300;
    font-size: 44px;
    text-anchor: middle;
}

.tv-text {
    fill: #f2f2f2;
    font-family: Inter, sans-serif;
    font-weight: 600;
    font-size: 30px;
}

.petals ellipse {
    opacity: 0.75;
}
```
